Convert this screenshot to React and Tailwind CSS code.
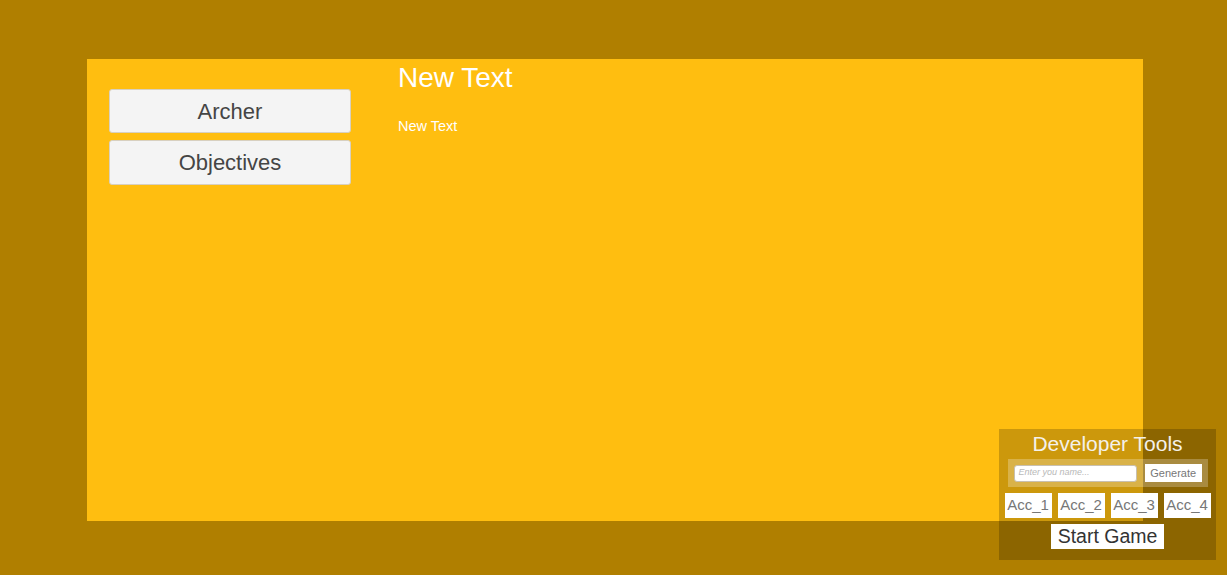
export default function App() {
  const accounts = ['Acc_1', 'Acc_2', 'Acc_3', 'Acc_4']

  return (
    <div className="relative h-[575px] w-[1227px] overflow-hidden bg-[#b07f00] font-['Liberation_Sans',Arial,sans-serif]">
      {/* main panel */}
      <div className="absolute left-[87px] top-[59px] flex h-[462px] w-[1056px] bg-[#ffbe10]">
        <div className="flex w-[311px] flex-col gap-[7px] pl-[22px] pt-[30px]">
          <button className="flex h-[44px] w-[242px] items-center justify-center rounded-[3px] border border-[#d8d0c0] bg-[#f4f4f4] text-[22px] text-[#454545]">
            Archer
          </button>
          <button className="flex h-[45px] w-[242px] items-center justify-center rounded-[3px] border border-[#d8d0c0] bg-[#f4f4f4] text-[22px] text-[#454545]">
            Objectives
          </button>
        </div>
        <div className="flex flex-col text-white">
          <div className="pt-[1px] text-[28px] leading-[36px]">New Text</div>
          <div className="mt-[22px] text-[14.5px] leading-[16px]">New Text</div>
        </div>
      </div>

      {/* developer tools overlay */}
      <div className="absolute left-[999px] top-[429px] flex h-[131px] w-[217px] flex-col items-center bg-black/20">
        <div className="mt-[1px] text-[21px] leading-[28px] text-[#f4f1ea]">Developer Tools</div>
        <div className="mt-[1px] flex h-[28px] w-[200px] items-center gap-[8px] bg-white/25 px-[6px]">
          <div className="flex h-[17px] w-[124px] items-center rounded-[3px] border border-[#c8c0b0] bg-white px-[4px] text-[9px] italic text-[#b8b8b8]">
            Enter you name...
          </div>
          <button className="flex h-[18px] w-[57px] items-center justify-center bg-white text-[11px] text-[#777]">
            Generate
          </button>
        </div>
        <div className="mt-[6px] flex gap-[6px]">
          {accounts.map((a) => (
            <button
              key={a}
              className="flex h-[25px] w-[47px] items-center justify-center bg-white text-[15px] text-[#777]"
            >
              {a}
            </button>
          ))}
        </div>
        <button className="mt-[6px] flex h-[25px] w-[113px] items-center justify-center bg-white text-[19.5px] text-[#333]">
          Start Game
        </button>
      </div>
    </div>
  )
}
